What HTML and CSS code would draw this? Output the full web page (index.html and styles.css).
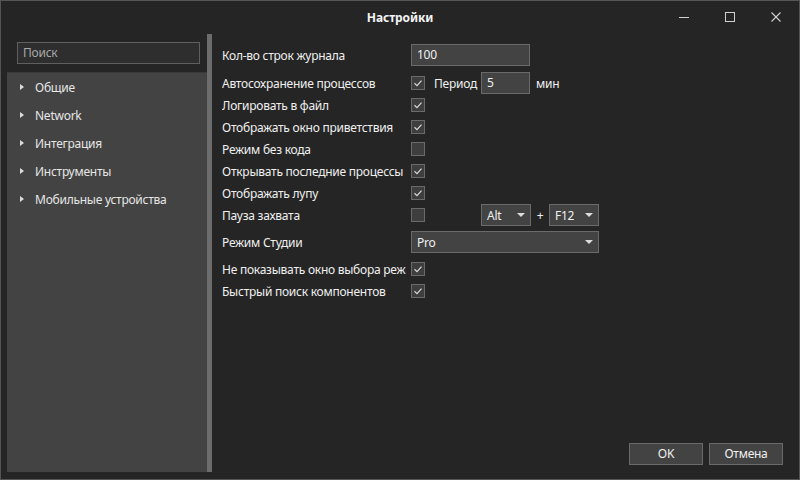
FILE: index.html
```html
<!DOCTYPE html>
<html lang="ru">
<head>
<meta charset="utf-8">
<title>Настройки</title>
<link rel="stylesheet" href="styles.css">
</head>
<body>
<div class="window">
  <div class="titlebar">
    <div class="title">Настройки</div>
    <div class="controls">
      <span class="ctl"><svg width="10" height="10" viewBox="0 0 10 10"><path d="M0 5.5H10" stroke="#d0d0d0" stroke-width="1"/></svg></span>
      <span class="ctl"><svg width="10" height="10" viewBox="0 0 10 10"><rect x="0.5" y="0.5" width="9" height="9" fill="none" stroke="#d0d0d0" stroke-width="1"/></svg></span>
      <span class="ctl"><svg width="10" height="10" viewBox="0 0 10 10"><path d="M0.5 0.5L9.5 9.5M9.5 0.5L0.5 9.5" stroke="#d0d0d0" stroke-width="1.1"/></svg></span>
    </div>
  </div>
  <div class="content">
    <div class="side">
      <div class="side-inner">
        <div class="search-area"><div class="search">Поиск</div></div>
        <div class="tree">
          <div class="node"><span class="tri"></span>Общие</div>
          <div class="node"><span class="tri"></span>Network</div>
          <div class="node"><span class="tri"></span>Интеграция</div>
          <div class="node"><span class="tri"></span>Инструменты</div>
          <div class="node"><span class="tri"></span>Мобильные устройства</div>
        </div>
      </div>
      <div class="splitter"></div>
    </div>
    <div class="main">
      <div class="form">
        <div class="row">
          <div class="label">Кол-во строк журнала</div>
          <div class="input w-wide">100</div>
        </div>
        <div class="row gap6">
          <div class="label">Автосохранение процессов</div>
          <span class="check on"><svg width="14" height="14" viewBox="0 0 14 14"><path d="M3.5 7.2L6 9.6L10.5 4.6" fill="none" stroke="#d8d8d8" stroke-width="1.2"/></svg></span>
          <span class="text period">Период</span>
          <div class="input w-small">5</div>
          <span class="text unit">мин</span>
        </div>
        <div class="row">
          <div class="label">Логировать в файл</div>
          <span class="check on"><svg width="14" height="14" viewBox="0 0 14 14"><path d="M3.5 7.2L6 9.6L10.5 4.6" fill="none" stroke="#d8d8d8" stroke-width="1.2"/></svg></span>
        </div>
        <div class="row">
          <div class="label">Отображать окно приветствия</div>
          <span class="check on"><svg width="14" height="14" viewBox="0 0 14 14"><path d="M3.5 7.2L6 9.6L10.5 4.6" fill="none" stroke="#d8d8d8" stroke-width="1.2"/></svg></span>
        </div>
        <div class="row">
          <div class="label">Режим без кода</div>
          <span class="check"></span>
        </div>
        <div class="row">
          <div class="label">Открывать последние процессы</div>
          <span class="check on"><svg width="14" height="14" viewBox="0 0 14 14"><path d="M3.5 7.2L6 9.6L10.5 4.6" fill="none" stroke="#d8d8d8" stroke-width="1.2"/></svg></span>
        </div>
        <div class="row">
          <div class="label">Отображать лупу</div>
          <span class="check on"><svg width="14" height="14" viewBox="0 0 14 14"><path d="M3.5 7.2L6 9.6L10.5 4.6" fill="none" stroke="#d8d8d8" stroke-width="1.2"/></svg></span>
        </div>
        <div class="row">
          <div class="label">Пауза захвата</div>
          <span class="check"></span>
          <div class="select w-alt"><span>Alt</span><span class="arrow"></span></div>
          <span class="text plus">+</span>
          <div class="select w-key"><span>F12</span><span class="arrow"></span></div>
        </div>
        <div class="row gap5">
          <div class="label">Режим Студии</div>
          <div class="select w-mode"><span>Pro</span><span class="arrow"></span></div>
        </div>
        <div class="row gap5">
          <div class="label">Не показывать окно выбора режима</div>
          <span class="check on"><svg width="14" height="14" viewBox="0 0 14 14"><path d="M3.5 7.2L6 9.6L10.5 4.6" fill="none" stroke="#d8d8d8" stroke-width="1.2"/></svg></span>
        </div>
        <div class="row">
          <div class="label">Быстрый поиск компонентов</div>
          <span class="check on"><svg width="14" height="14" viewBox="0 0 14 14"><path d="M3.5 7.2L6 9.6L10.5 4.6" fill="none" stroke="#d8d8d8" stroke-width="1.2"/></svg></span>
        </div>
      </div>
      <div class="buttons">
        <div class="btn">OK</div>
        <div class="btn">Отмена</div>
      </div>
    </div>
  </div>
</div>
</body>
</html>
```
FILE: styles.css
```css
* { box-sizing: border-box; }
html, body { margin: 0; padding: 0; background: #252525; }
body {
  font-family: "Noto Sans", "Open Sans", sans-serif;
  font-size: 12px;
  letter-spacing: -0.25px;
  color: #f0f0f0;
}
.window {
  width: 800px;
  height: 480px;
  border: 1px solid #555555;
  background: #252525;
  display: flex;
  flex-direction: column;
}
.titlebar {
  height: 33px;
  position: relative;
  display: flex;
  align-items: center;
  justify-content: center;
}
.title {
  font-weight: bold;
  color: #f4f4f4;
  font-size: 12px;
  letter-spacing: -0.1px;
}
.controls {
  position: absolute;
  right: 18px;
  top: 11px;
  display: flex;
  gap: 36px;
}
.ctl { width: 10px; height: 10px; display: block; }
.ctl svg { display: block; }
.content {
  flex: 1;
  display: flex;
  min-height: 0;
}
.side {
  display: flex;
  padding-left: 6px;
  padding-bottom: 7px;
}
.side-inner {
  width: 200px;
  display: flex;
  flex-direction: column;
}
.search-area {
  height: 38px;
  padding: 8px 0 0 10px;
}
.search {
  width: 183px;
  height: 22px;
  border: 1px solid #5f5f5f;
  background: #2e2e2e;
  color: #a8a8a8;
  padding-left: 5px;
  line-height: 20px;
}
.tree {
  flex: 1;
  background: #434343;
  border-top: 1px solid #3a3a3a;
}
.node {
  height: 28px;
  display: flex;
  align-items: center;
  color: #e6e6e6;
  padding-left: 13px;
}
.tri {
  width: 0;
  height: 0;
  border-top: 3.5px solid transparent;
  border-bottom: 3.5px solid transparent;
  border-left: 4px solid #dcdcdc;
  margin-right: 11px;
}
.splitter {
  width: 5px;
  background: #6c6c6c;
}
.main {
  flex: 1;
  display: flex;
  flex-direction: column;
  padding: 10px 16px 14px 10px;
}
.form { flex: 1; }
.row {
  height: 22px;
  display: flex;
  align-items: center;
}
.gap6 { margin-top: 6px; }
.gap5 { margin-top: 5px; }
.label {
  width: 184px;
  margin-right: 5px;
  white-space: nowrap;
  overflow: hidden;
}
.input {
  height: 22px;
  border: 1px solid #6a6a6a;
  background: #434343;
  padding-left: 5px;
  line-height: 20px;
}
.w-wide { width: 119px; }
.w-small { width: 49px; }
.check {
  width: 14px;
  height: 14px;
  border: 1px solid #6a6a6a;
  background: #3e3e3e;
  display: block;
}
.check svg {
  display: block;
  margin: -1px 0 0 -1px;
}
.text { white-space: nowrap; }
.period { margin-left: 9px; width: 47px; }
.unit { margin-left: 6px; }
.select {
  height: 22px;
  border: 1px solid #6a6a6a;
  background: #434343;
  display: flex;
  align-items: center;
  justify-content: space-between;
  padding: 0 5px 0 5px;
}
.arrow {
  width: 0;
  height: 0;
  border-left: 4px solid transparent;
  border-right: 4px solid transparent;
  border-top: 4px solid #dcdcdc;
}
.w-alt { width: 50px; margin-left: 56px; }
.w-key { width: 50px; }
.plus { width: 18px; text-align: center; }
.w-mode { width: 188px; }
.buttons {
  display: flex;
  justify-content: flex-end;
  gap: 6px;
}
.btn {
  width: 74px;
  height: 22px;
  border: 1px solid #6a6a6a;
  background: #434343;
  text-align: center;
  line-height: 20px;
  color: #f0f0f0;
}
```
